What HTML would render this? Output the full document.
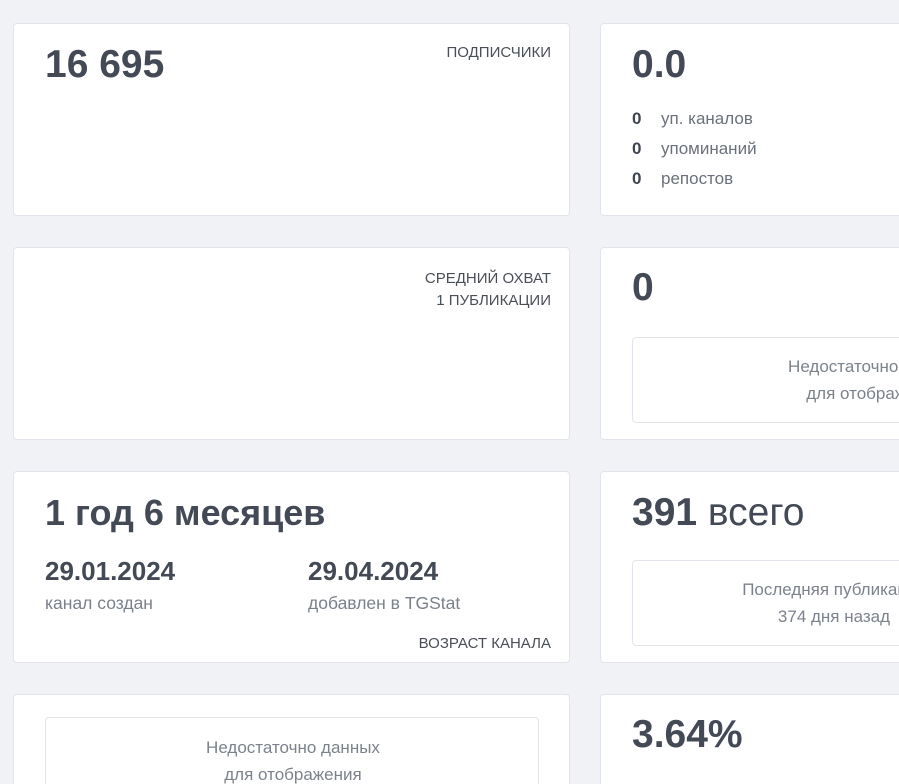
<!DOCTYPE html>
<html><head><meta charset="utf-8"><style>
*{margin:0;padding:0;box-sizing:border-box}
html,body{width:899px;height:784px;overflow:hidden}
body{background:#f1f2f6;font-family:"Liberation Sans",sans-serif;color:#454b55;position:relative}
.c{position:absolute;background:#fff;border:1px solid #e1e4ea;border-radius:4px;overflow:hidden}
.r{width:299px;border-right:none;border-radius:4px 0 0 4px}
.a{position:absolute;white-space:nowrap}
.big{font-size:39px;font-weight:bold;color:#434955}
.lbl{font-size:15px;color:#4a4f57;text-align:right}
.sub{font-size:17.5px;color:#7b818b}
.box{position:absolute;border:1px solid #e1e4ea;border-radius:4px;background:#fff}
.gray{font-size:17px;color:#7c828c;text-align:center;line-height:27px}
</style></head><body>
<div class="c" style="left:13px;top:23px;width:557px;height:193px">
 <div class="a big" style="left:31px;top:19px">16 695</div>
 <div class="a lbl" style="right:18px;top:20px">ПОДПИСЧИКИ</div>
</div>
<div class="c r" style="left:600px;top:23px;height:193px">
 <div class="a big" style="left:31px;top:19px">0.0</div>
 <div class="a" style="left:31px;top:80px;font-size:17px;line-height:30px;color:#6b717b"><b style="color:#3f4550;display:inline-block;width:29px">0</b>уп. каналов<br><b style="color:#3f4550;display:inline-block;width:29px">0</b>упоминаний<br><b style="color:#3f4550;display:inline-block;width:29px">0</b>репостов</div>
</div>
<div class="c" style="left:13px;top:247px;width:557px;height:193px">
 <div class="a lbl" style="right:18px;top:20px;line-height:22px">СРЕДНИЙ ОХВАТ<br>1 ПУБЛИКАЦИИ</div>
</div>
<div class="c r" style="left:600px;top:247px;height:193px">
 <div class="a big" style="left:31px;top:18px">0</div>
 <div class="box" style="left:31px;top:89px;width:484px;height:86px"><div class="a gray" style="left:242px;top:15px;transform:translateX(-50%)">Недостаточно данных<br>для отображения</div></div>
</div>
<div class="c" style="left:13px;top:471px;width:557px;height:192px">
 <div class="a big" style="left:31px;top:20px;font-size:36px">1 год 6 месяцев</div>
 <div class="a" style="left:31px;top:84px;font-size:26px;font-weight:bold;color:#434955">29.01.2024</div>
 <div class="a sub" style="left:31px;top:121px">канал создан</div>
 <div class="a" style="left:294px;top:84px;font-size:26px;font-weight:bold;color:#434955">29.04.2024</div>
 <div class="a sub" style="left:294px;top:121px">добавлен в TGStat</div>
 <div class="a lbl" style="right:18px;top:163px">ВОЗРАСТ КАНАЛА</div>
</div>
<div class="c r" style="left:600px;top:471px;height:192px">
 <div class="a big" style="left:31px;top:19px">391 <span style="font-weight:normal">всего</span></div>
 <div class="box" style="left:31px;top:88px;width:402px;height:86px"><div class="a gray" style="left:201px;top:15px;transform:translateX(-50%)">Последняя публикация<br>374 дня назад</div></div>
</div>
<div class="c" style="left:13px;top:694px;width:557px;height:120px">
 <div class="box" style="left:31px;top:22px;width:494px;height:100px"><div class="a gray" style="left:247px;top:16px;transform:translateX(-50%)">Недостаточно данных<br>для отображения</div></div>
</div>
<div class="c r" style="left:600px;top:694px;height:120px">
 <div class="a big" style="left:31px;top:18px">3.64%</div>
</div>
</body></html>
